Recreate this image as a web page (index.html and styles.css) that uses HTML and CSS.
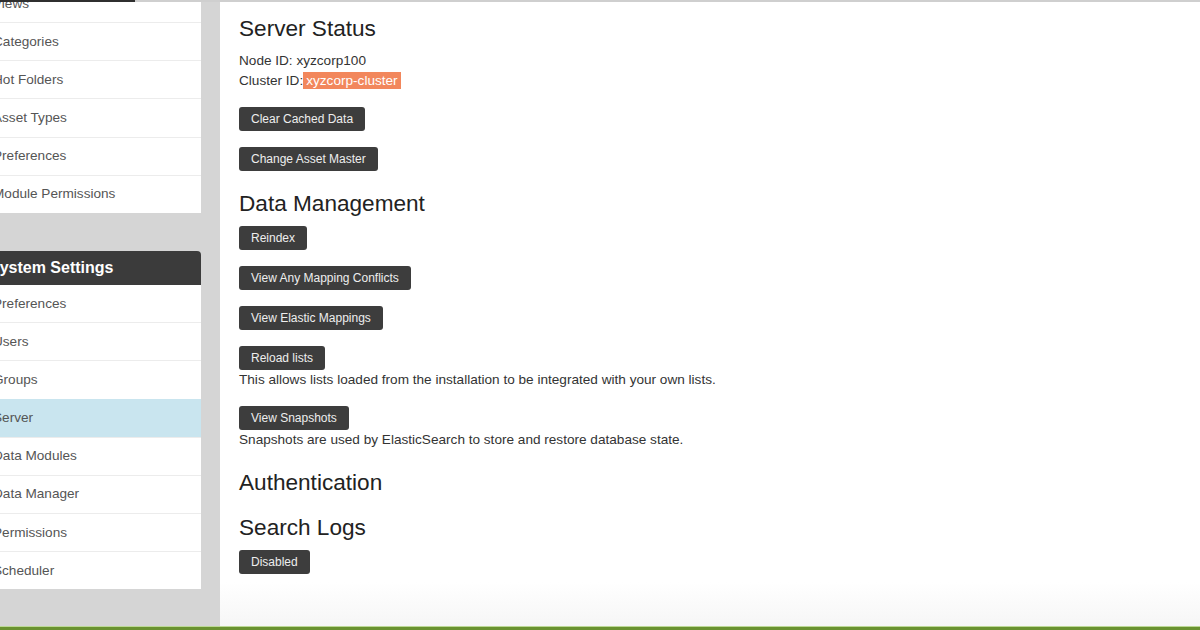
FILE: index.html
```html
<!DOCTYPE html>
<html>
<head>
<meta charset="utf-8">
<title>Server</title>
<link rel="stylesheet" href="styles.css">
</head>
<body>
<div class="page">
  <div class="topline"><span class="topline-active"></span></div>
  <div class="layout">
    <aside class="sidebar">
      <ul class="panel panel-first">
        <li class="item">Views</li>
        <li class="item">Categories</li>
        <li class="item">Hot Folders</li>
        <li class="item">Asset Types</li>
        <li class="item">Preferences</li>
        <li class="item">Module Permissions</li>
      </ul>
      <div class="panel panel-second">
        <div class="panel-heading">System Settings</div>
        <ul class="list">
          <li class="item">Preferences</li>
          <li class="item">Users</li>
          <li class="item">Groups</li>
          <li class="item active">Server</li>
          <li class="item">Data Modules</li>
          <li class="item">Data Manager</li>
          <li class="item">Permissions</li>
          <li class="item">Scheduler</li>
        </ul>
      </div>
    </aside>
    <main class="main">
      <section class="section">
        <h2 class="title">Server Status</h2>
        <div class="body">
          <p class="info">Node ID: xyzcorp100<br>Cluster ID:<span class="highlight">xyzcorp-cluster</span></p>
          <button class="btn">Clear Cached Data</button>
          <button class="btn">Change Asset Master</button>
        </div>
      </section>
      <section class="section">
        <h2 class="title">Data Management</h2>
        <div class="body">
          <button class="btn">Reindex</button>
          <button class="btn">View Any Mapping Conflicts</button>
          <button class="btn">View Elastic Mappings</button>
          <div class="item-group">
            <button class="btn">Reload lists</button>
            <p class="note">This allows lists loaded from the installation to be integrated with your own lists.</p>
          </div>
          <div class="item-group">
            <button class="btn">View Snapshots</button>
            <p class="note">Snapshots are used by ElasticSearch to store and restore database state.</p>
          </div>
        </div>
      </section>
      <section class="section">
        <h2 class="title">Authentication</h2>
      </section>
      <section class="section">
        <h2 class="title">Search Logs</h2>
        <div class="body">
          <button class="btn">Disabled</button>
        </div>
      </section>
    </main>
  </div>
  <div class="footer"></div>
</div>
</body>
</html>
```

FILE: styles.css
```css
html, body {
  margin: 0;
  padding: 0;
}
body {
  font-family: "Liberation Sans", Arial, sans-serif;
  font-size: 13.6px;
  color: #333;
  background: #d5d5d5;
}
.page {
  width: 1200px;
  height: 630px;
  display: flex;
  flex-direction: column;
  overflow: hidden;
}
.topline {
  height: 2px;
  flex: none;
  background: #cfcfcf;
  display: flex;
}
.topline-active {
  width: 135px;
  background: #2f2f2f;
}
.layout {
  flex: 1;
  display: flex;
  min-height: 0;
  overflow: hidden;
}
.sidebar {
  width: 220px;
  flex: none;
  background: #d5d5d5;
  overflow: hidden;
}
.panel {
  list-style: none;
  margin: 0;
  padding: 0;
  width: 223px;
  margin-left: -22px;
  background: #fff;
}
.panel-first {
  margin-top: -18px;
}
.panel-second {
  margin-top: 37.5px;
  background: transparent;
}
.panel-heading {
  background: #3b3b3b;
  color: #fff;
  font-weight: bold;
  font-size: 16px;
  line-height: 20px;
  padding: 7px 11px;
  border-top-right-radius: 4px;
}
.list {
  list-style: none;
  margin: 0;
  padding: 0;
  background: #fff;
}
.item {
  padding: 8.6px 15px;
  line-height: 20px;
  color: #555;
  background: #fff;
  border-top: 1px solid #ececec;
}
.panel-first .item:first-child {
  border-top: none;
  padding-top: 9.5px;
}
.list .item:first-child {
  border-top: none;
  padding-top: 9px;
}
.item.active {
  background: #c9e5ef;
  border-top-color: #c9e5ef;
}
.main {
  flex: 1;
  background: linear-gradient(to bottom, #fff 0, #fff 580px, #f6f6f6 100%);
  padding: 13.5px 19px 0;
  display: flex;
  flex-direction: column;
  gap: 19.5px;
}
.section {
  display: flex;
  flex-direction: column;
  align-items: flex-start;
}
.title {
  margin: 0;
  font-size: 22.6px;
  line-height: 26px;
  font-weight: normal;
  color: #222;
}
.body {
  margin-top: 9.3px;
  display: flex;
  flex-direction: column;
  align-items: flex-start;
  gap: 16px;
}
.info {
  margin: 0;
  margin-top: 0.5px;
  line-height: 20px;
}
.highlight {
  background: #f2875c;
  color: #fff;
  padding: 1px 3px 1px 3px;
}
.item-group {
  display: flex;
  flex-direction: column;
  align-items: flex-start;
}
.btn {
  font-family: "Liberation Sans", Arial, sans-serif;
  font-size: 12px;
  line-height: 18px;
  height: 24px;
  padding: 3px 12px;
  background: #3d3d3d;
  color: #eee;
  border: none;
  border-radius: 3px;
  margin: 0;
  cursor: pointer;
}
.note {
  margin: 0;
  line-height: 20px;
}
.footer {
  flex: none;
  height: 3px;
  border-top: 1px solid #bcd895;
  background: #6a9230;
}
```
